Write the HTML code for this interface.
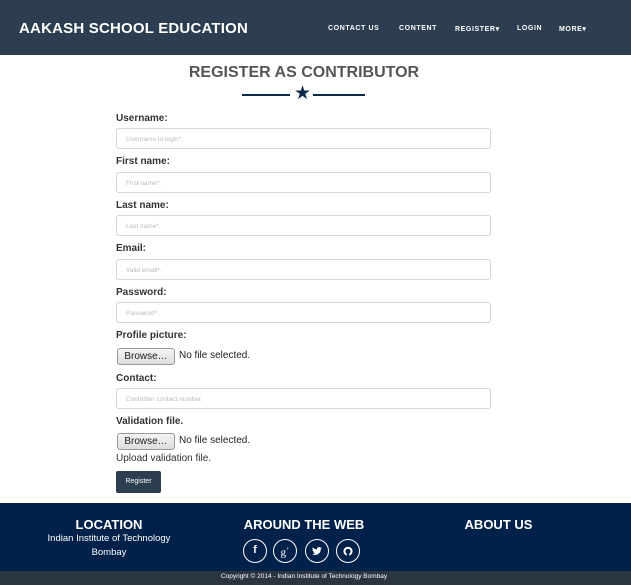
<!DOCTYPE html>
<html><head><meta charset="utf-8"><style>
*{margin:0;padding:0;box-sizing:border-box}
body{width:631px;height:585px;position:relative;background:#fff;font-family:"Liberation Sans",sans-serif;overflow:hidden}
.a{position:absolute}
.nav{left:0;top:0;width:631px;height:55px;background:#2c3e50}
.brand{left:19px;top:20px;color:#fff;font-weight:bold;font-size:15px;letter-spacing:0.2px}
.ni{top:25px;color:#fff;font-weight:bold;font-size:7px;letter-spacing:0.6px}
h1{position:absolute;left:0;width:608px;text-align:center;top:64px;font-size:16px;color:#555;font-weight:bold}
.lbl{left:116px;font-size:10px;font-weight:bold;color:#333}
.in{left:116px;width:375px;height:21px;border:1px solid #ccd7e0;border-radius:3px;font-size:6.5px;color:#b5bcc4;padding:7px 0 0 9px}
.br{left:117px;width:58px;height:17px;border:1px solid #999;border-radius:3px;background:linear-gradient(#f4f4f4,#ddd);font-size:10px;color:#222;text-align:center;line-height:15px}
.nf{left:179px;font-size:10px;color:#222}
.fh{top:517px;color:#fff;font-weight:bold;font-size:13px;text-align:center}
.c{width:24px;height:24px;border:1.3px solid #fff;border-radius:50%;top:539px;color:#fff;font-size:11px;font-weight:bold;text-align:center;line-height:21px}
.c svg{position:absolute;left:5px;top:5px}
</style></head><body>
<div class="a nav"></div>
<div class="a brand">AAKASH SCHOOL EDUCATION</div>
<div class="a ni" style="left:328px">CONTACT US</div>
<div class="a ni" style="left:399px">CONTENT</div>
<div class="a ni" style="left:455px">REGISTER▾</div>
<div class="a ni" style="left:517px">LOGIN</div>
<div class="a ni" style="left:559px">MORE▾</div>
<h1>REGISTER AS CONTRIBUTOR</h1>
<div class="a" style="left:242px;top:94px;width:48px;height:2px;background:#0d2a4a"></div>
<div class="a" style="left:313px;top:94px;width:52px;height:2px;background:#0d2a4a"></div>
<div class="a" style="left:294px;top:82px;font-size:19px;color:#0d2a4a">★</div>

<div class="a lbl" style="top:113px">Username:</div>
<div class="a in" style="top:128px">Username to login*.</div>
<div class="a lbl" style="top:156px">First name:</div>
<div class="a in" style="top:172px">First name*.</div>
<div class="a lbl" style="top:200px">Last name:</div>
<div class="a in" style="top:215px">Last name*.</div>
<div class="a lbl" style="top:243px">Email:</div>
<div class="a in" style="top:259px">Valid email*.</div>
<div class="a lbl" style="top:287px">Password:</div>
<div class="a in" style="top:302px">Password*.</div>
<div class="a lbl" style="top:330px">Profile picture:</div>
<div class="a br" style="top:348px">Browse…</div>
<div class="a nf" style="top:350px">No file selected.</div>
<div class="a lbl" style="top:373px">Contact:</div>
<div class="a in" style="top:388px">Contribter contact number.</div>
<div class="a lbl" style="top:416px">Validation file.</div>
<div class="a br" style="top:433px">Browse…</div>
<div class="a nf" style="top:435px">No file selected.</div>
<div class="a" style="left:116px;top:453px;font-size:10px;color:#333">Upload validation file.</div>
<div class="a" style="left:116px;top:471px;width:45px;height:22px;background:#2c3e50;border-radius:2px;color:#fff;font-size:7px;text-align:center;line-height:22px">Register</div>

<div class="a" style="left:0;top:503px;width:631px;height:68px;background:#00214a"></div>
<div class="a" style="left:0;top:571px;width:631px;height:14px;background:#2b3542"></div>
<div class="a fh" style="left:30px;width:158px">LOCATION</div>
<div class="a" style="left:30px;width:158px;top:532px;color:#fff;font-size:9.5px;text-align:center;line-height:14px">Indian Institute of Technology<br>Bombay</div>
<div class="a fh" style="left:224px;width:160px">AROUND THE WEB</div>
<div class="a fh" style="left:440px;width:117px">ABOUT US</div>
<div class="a c" style="left:243px">f</div>
<div class="a c" style="left:273px;font-family:'Liberation Serif',serif;font-weight:normal">g<sup style="font-size:6px">+</sup></div>
<div class="a c" style="left:305px"><svg width="12" height="12" viewBox="0 0 12 12"><path d="M11 3c-.4.2-.8.3-1.2.3.4-.3.7-.6.9-1.1-.4.2-.8.4-1.3.5A2 2 0 0 0 6 4.5 5.7 5.7 0 0 1 1.8 2.4a2 2 0 0 0 .6 2.7c-.3 0-.6-.1-.9-.3 0 1 .7 1.8 1.6 2-.3.1-.6.1-.9 0 .3.8 1 1.4 1.9 1.4A4 4 0 0 1 1 9a5.7 5.7 0 0 0 8.8-5.1c.5-.3.9-.6 1.2-.9z" fill="#fff"/></svg></div>
<div class="a c" style="left:336px"><svg width="12" height="12" viewBox="0 0 12 12"><circle cx="6" cy="6.3" r="3.6" fill="none" stroke="#fff" stroke-width="2"/><rect x="4.8" y="8" width="2.4" height="3" fill="#00214a"/></svg></div>
<div class="a" style="left:0;width:608px;top:573px;text-align:center;color:#fff;font-size:6.5px">Copyright © 2014 - Indian Institute of Technology Bombay</div>
</body></html>
